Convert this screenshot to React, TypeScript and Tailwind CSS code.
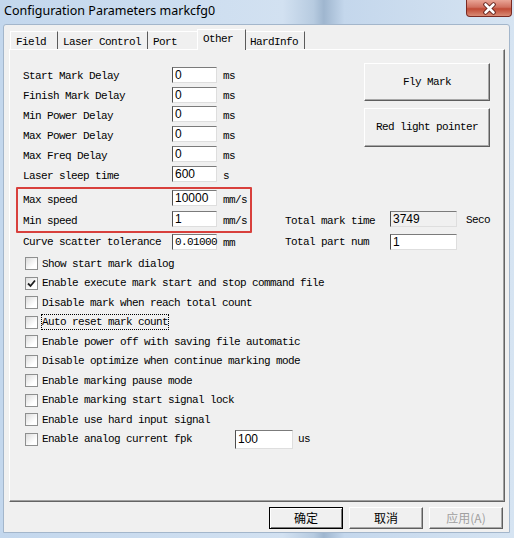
import type { ReactNode } from 'react'

const mono = "font-['Liberation_Mono',monospace] text-[11px] tracking-[-0.6px] text-black"
const sans = "font-['Liberation_Sans',Arial,sans-serif] text-[12px] text-black"

const topRows = [
  { label: 'Start Mark Delay', value: '0', unit: 'ms', h: 'h-[21px]' },
  { label: 'Finish Mark Delay', value: '0', unit: 'ms', h: 'h-[19px]' },
  { label: 'Min Power Delay', value: '0', unit: 'ms', h: 'h-[20px]' },
  { label: 'Max Power Delay', value: '0', unit: 'ms', h: 'h-[20px]' },
  { label: 'Max Freq Delay', value: '0', unit: 'ms', h: 'h-[20px]' },
  { label: 'Laser sleep time', value: '600', unit: 's', h: 'h-[20px]' },
]

const speedRows = [
  { label: 'Max speed', value: '10000', unit: 'mm/s', h: 'h-[20px]' },
  { label: 'Min speed', value: '1', unit: 'mm/s', h: 'h-[22px]' },
]

const options = [
  { label: 'Show start mark dialog' },
  { label: 'Enable execute mark start and stop command file', checked: true },
  { label: 'Disable mark when reach total count' },
  { label: 'Auto reset mark count', focus: true },
  { label: 'Enable power off with saving file automatic' },
  { label: 'Disable optimize when continue marking mode' },
  { label: 'Enable marking pause mode' },
  { label: 'Enable marking start signal lock' },
  { label: 'Enable use hard input signal' },
]

function TextBox({ children, className }: { children: ReactNode; className: string }) {
  return (
    <div
      className={`flex items-center border border-t-[#7b7b7b] border-l-[#4e4e4e] border-r-[#dedede] border-b-[#dedede] pl-[2px] leading-[14px] ${className}`}
    >
      {children}
    </div>
  )
}

function Row({ label, value, unit, h }: { label: string; value: string; unit: string; h: string }) {
  return (
    <div className={`flex items-center ${h}`}>
      <span className={`w-[149px] pt-[2px] ${mono}`}>{label}</span>
      <TextBox className={`h-[16px] w-[45px] -mt-[2px] bg-white ${sans}`}>{value}</TextBox>
      <span className={`ml-[6px] pt-[2px] ${mono}`}>{unit}</span>
    </div>
  )
}

function CheckBox({ checked }: { checked?: boolean }) {
  return (
    <div className="flex h-[13px] w-[13px] shrink-0 items-center justify-center border border-[#8e8f8f] bg-[linear-gradient(135deg,#dcdcdc,#ffffff_70%)]">
      {checked && (
        <svg width="9" height="9" viewBox="0 0 9 9">
          <path d="M1 4.5 L3.5 7 L8 1.5" fill="none" stroke="#1e1e1e" strokeWidth="1.8" />
        </svg>
      )}
    </div>
  )
}

export default function App() {
  return (
    <div className="flex h-[538px] w-[514px] flex-col overflow-hidden bg-[linear-gradient(90deg,#c3d7ed_0%,#d2e1f1_55%,#b7cbe0_61%,#9fb6cf_63%,#c4d7ec_67%,#d6e4f2_100%)]">
      {/* title bar */}
      <div className="flex h-[24px] shrink-0 justify-between">
        <span className="pl-[4px] pt-[2px] font-['Noto_Sans',sans-serif] text-[12.5px] leading-[18px] text-black">
          Configuration Parameters markcfg0
        </span>
        <div className="mr-[2px] flex h-[17px] w-[46px] items-center justify-center rounded-b-[4px] border border-t-0 border-[#7a2a22] bg-[linear-gradient(180deg,#e9a596,#d0705f_45%,#c04a35_55%,#d98b75)]">
          <svg width="15" height="13" viewBox="0 0 15 13">
            <path d="M3.5 2.5 L11.5 10.5 M11.5 2.5 L3.5 10.5" stroke="#5a1a14" strokeWidth="4.4" strokeLinecap="round" />
            <path d="M3.5 2.5 L11.5 10.5 M11.5 2.5 L3.5 10.5" stroke="#ffffff" strokeWidth="2.6" strokeLinecap="round" />
          </svg>
        </div>
      </div>

      {/* client */}
      <div className="ml-[3px] mr-[4px] flex h-[509px] shrink-0 flex-col rounded-t-[3px] border border-[#a3b6cb] bg-[#f0f0f0]">
        {/* tabs */}
        <div className={`flex h-[24px] items-end pl-[6px] ${mono}`}>
          <div className="h-[18px] w-[48px] border-l border-t border-l-white border-t-white border-r border-r-[#5a5a5a] pl-[5px] pt-[3px] leading-[14px]">Field</div>
          <div className="h-[18px] w-[90px] border-t border-t-white border-r border-r-[#5a5a5a] pl-[5px] pt-[3px] leading-[14px]">Laser Control</div>
          <div className="h-[18px] w-[49px] border-t border-t-white pl-[5px] pt-[3px] leading-[14px]">Port</div>
          <div className="relative z-10 -mb-px h-[21px] w-[49px] border-l border-t border-l-white border-t-white border-r border-r-[#5a5a5a] bg-[#f0f0f0] pl-[5px] pt-[2px] leading-[14px]">Other</div>
          <div className="h-[18px] w-[59px] border-t border-t-white border-r border-r-[#5a5a5a] pl-[4px] pt-[3px] leading-[14px]">HardInfo</div>
        </div>

        {/* panel */}
        <div className="ml-[5px] flex h-[453px] w-[496px] flex-col border border-l-white border-t-white border-r-[#646464] border-b-[#646464] shadow-[inset_-1px_-1px_0_#a0a0a0]">
          <div className="flex">
            <div className="flex w-[250px] flex-col pl-[6px] pt-[15px]">
              {topRows.map((r) => (
                <div key={r.label} className="pl-[7px]">
                  <Row {...r} />
                </div>
              ))}
              <div className="mt-[2px] h-[46px] w-[236px] rounded-[1px] border-2 border-[#d8403c] pl-[5px]">
                {speedRows.map((r) => (
                  <Row key={r.label} {...r} />
                ))}
              </div>
              <div className="flex h-[18px] items-center pl-[7px]">
                <span className={`w-[149px] pt-[1px] ${mono}`}>Curve scatter tolerance</span>
                <TextBox className={`h-[16px] w-[45px] bg-white ${mono}`}>0.01000</TextBox>
                <span className={`ml-[6px] mt-[3px] ${mono} text-[10px]`}>mm</span>
              </div>
            </div>

            <div className="flex flex-1 flex-col justify-between">
              <div className={`ml-[104px] flex flex-col pt-[13px] ${mono}`}>
                <div className="flex h-[38px] w-[126px] items-center justify-center border border-l-white border-t-white border-r-[#5e5e5e] border-b-[#5e5e5e] shadow-[inset_-1px_-1px_0_#a8a8a8]">
                  Fly Mark
                </div>
                <div className="mt-[7px] flex h-[39px] w-[126px] items-center justify-center border border-l-white border-t-white border-r-[#5e5e5e] border-b-[#5e5e5e] shadow-[inset_-1px_-1px_0_#a8a8a8]">
                  Red light pointer
                </div>
              </div>
              <div className="flex flex-col pl-[25px]">
                <div className="flex h-[22px] items-center">
                  <span className={`w-[105px] pt-[2px] ${mono}`}>Total mark time</span>
                  <TextBox className={`h-[16px] w-[67px] -mt-[2px] bg-[#f0f0f0] ${sans}`}>3749</TextBox>
                  <span className={`ml-[9px] ${mono}`}>Seco</span>
                </div>
                <div className="mt-[2px] flex h-[18px] items-center">
                  <span className={`w-[105px] ${mono}`}>Total part num</span>
                  <TextBox className={`h-[16px] w-[67px] bg-white ${sans}`}>1</TextBox>
                </div>
              </div>
            </div>
          </div>

          {/* options */}
          <div className="flex flex-col pl-[15px] pt-[3px]">
            {options.map((o) => (
              <div key={o.label} className="flex h-[19.5px] items-center">
                <CheckBox checked={o.checked} />
                {o.focus ? (
                  <span className={`ml-[3px] border border-dotted border-black leading-[14px] ${mono}`}>{o.label}</span>
                ) : (
                  <span className={`ml-[4px] ${mono}`}>{o.label}</span>
                )}
              </div>
            ))}
            <div className="flex h-[19.5px] items-center">
              <CheckBox />
              <span className={`ml-[4px] w-[193px] ${mono}`}>Enable analog current fpk</span>
              <TextBox className={`h-[19px] w-[58px] bg-white ${sans}`}>100</TextBox>
              <span className={`ml-[5px] ${mono}`}>us</span>
            </div>
          </div>
        </div>

        {/* dialog buttons */}
        <div className="mt-[5px] flex justify-end gap-[6px] pr-[6px] font-['Noto_Sans_CJK_SC',sans-serif] text-[12px]">
          <div className="flex h-[22px] w-[74px] items-center justify-center border border-black shadow-[inset_1px_1px_0_#ffffff,inset_-1px_-1px_0_#7a7a7a] text-black">
            确定
          </div>
          <div className="flex h-[22px] w-[74px] items-center justify-center border border-l-white border-t-white border-r-[#5e5e5e] border-b-[#5e5e5e] shadow-[inset_-1px_-1px_0_#a8a8a8] text-black">
            取消
          </div>
          <div className="flex h-[22px] w-[74px] items-center justify-center border border-l-white border-t-white border-r-[#5e5e5e] border-b-[#5e5e5e] shadow-[inset_-1px_-1px_0_#a8a8a8] text-[#a0a0a0]">
            应用(A)
          </div>
        </div>
      </div>
    </div>
  )
}
